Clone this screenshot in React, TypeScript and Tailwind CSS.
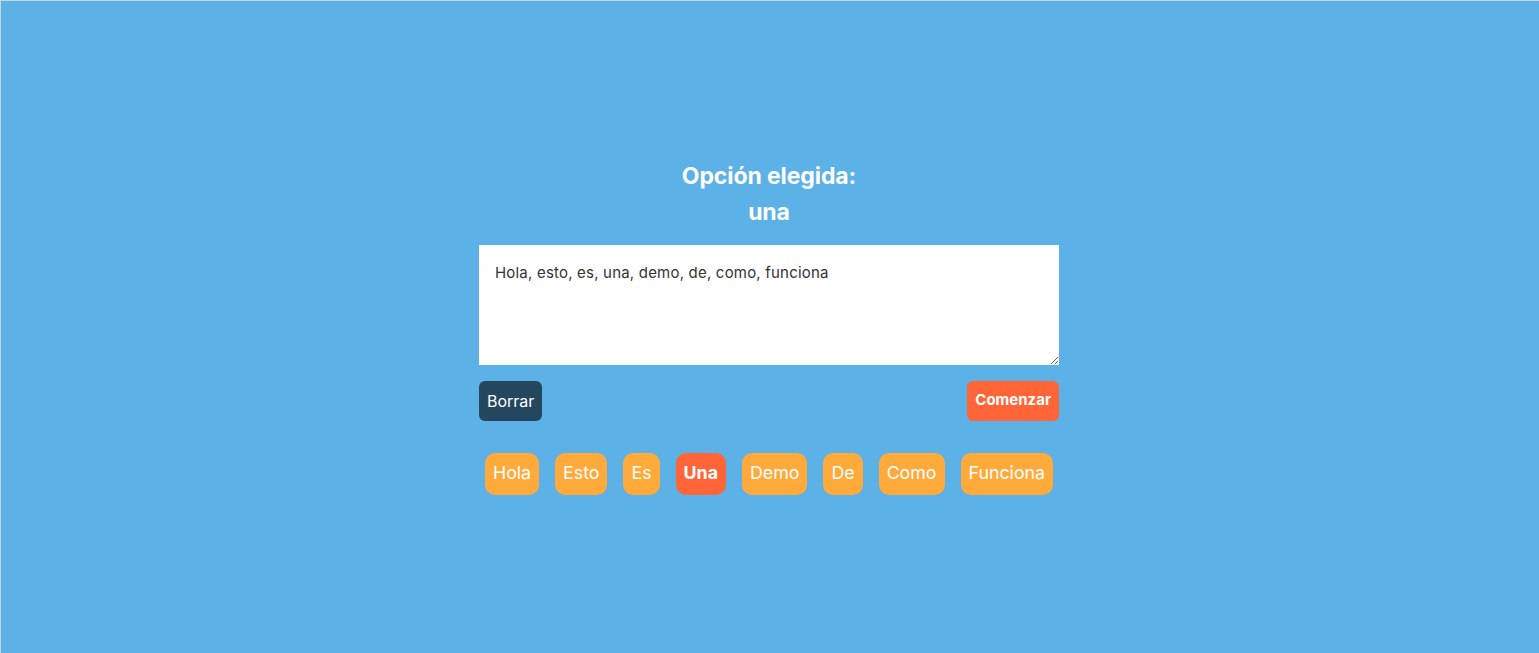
import { useState } from 'react'

const palabras = ['Hola', 'Esto', 'Es', 'Una', 'Demo', 'De', 'Como', 'Funciona']

export default function App() {
  const [texto, setTexto] = useState('Hola, esto, es, una, demo, de, como, funciona')
  const elegida = 'Una'

  return (
    <div
      className="min-h-screen h-[653px] bg-[#5cb1e6] border-t border-l border-[#c9d3da] pr-[2px] pt-[2px] flex items-center justify-center"
      style={{ fontFamily: 'Inter, "Noto Sans", sans-serif' }}
    >
      <div className="w-[580px] flex flex-col pb-[4px]">
        {/* Resultado */}
        <h2 className="text-white text-[23px] font-bold text-center leading-[36px] tracking-[-0.1px]">
          Opción elegida:
          <br />
          una
        </h2>

        <textarea
          value={texto}
          onChange={(e) => setTexto(e.target.value)}
          className="mt-[15px] h-[120px] w-full bg-white px-4 pt-[17px] pb-[13px] text-[15px] tracking-[0.2px] text-[#333] outline-none resize-y block"
        />

        <div className="mt-4 flex justify-between">
          <button className="h-10 px-2 rounded-md bg-[#24475e] text-white text-[16px]">Borrar</button>
          <button className="h-10 px-2 rounded-md bg-[#ff6536] text-white text-[15px] font-bold">Comenzar</button>
        </div>

        {/* Palabras */}
        <div className="mt-8 flex justify-center gap-4">
          {palabras.map((p) => (
            <span
              key={p}
              className={
                p === elegida
                  ? 'h-[42px] px-2 rounded-[10px] bg-[#ff6536] text-white text-[17.8px] font-bold flex items-center'
                  : 'h-[42px] px-2 rounded-[10px] bg-[#ffaa3b] text-white text-[17.8px] flex items-center'
              }
            >
              {p}
            </span>
          ))}
        </div>
      </div>
    </div>
  )
}
